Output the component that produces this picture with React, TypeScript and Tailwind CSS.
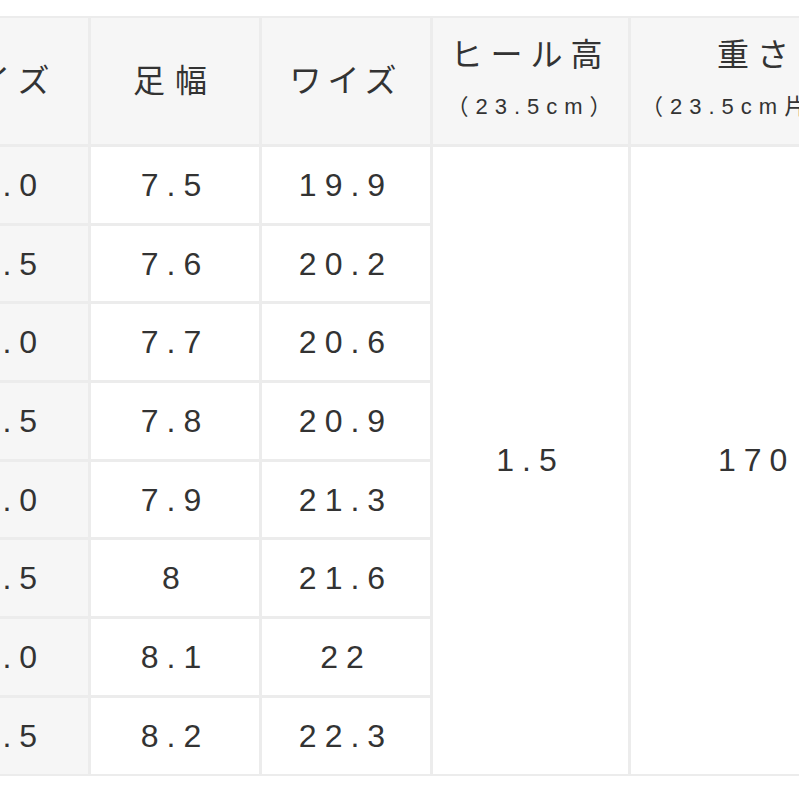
const sizes = ["22.0", "22.5", "23.0", "23.5", "24.0", "24.5", "25.0", "25.5"];
const widths = ["7.5", "7.6", "7.7", "7.8", "7.9", "8", "8.1", "8.2"];
const wises = ["19.9", "20.2", "20.6", "20.9", "21.3", "21.6", "22", "22.3"];

const font = { fontFamily: '"Liberation Sans", "Noto Sans CJK JP", sans-serif' };

const App = () => {
  return (
    <div className="h-[799px] w-[799px] overflow-hidden bg-white pt-[16px] text-[#333333]" style={font}>
      <div className="ml-[-92px] grid w-[1000px] grid-cols-[180px_168px_168px_195px_260px] grid-rows-[126px_repeat(8,75.7px)] gap-[3px] bg-[#ececec] py-[2px]">
        {/* header */}
        <div className="flex items-center justify-center bg-[#f6f6f6] text-[32px] tracking-[8px]">サイズ</div>
        <div className="flex items-center justify-center bg-[#f6f6f6] text-[32px] tracking-[10px]">足幅</div>
        <div className="flex items-center justify-center bg-[#f6f6f6] text-[32px] tracking-[6px]">ワイズ</div>
        <div className="flex flex-col items-center justify-center gap-[12px] bg-[#f6f6f6]">
          <span className="text-[32px] leading-[40px] tracking-[8px]">ヒール高</span>
          <span className="pl-[4px] text-[22px] leading-[40px] tracking-[7px]">（23.5cm）</span>
        </div>
        <div className="flex flex-col items-start justify-center gap-[12px] bg-[#f6f6f6] pl-[10px]">
          <span className="self-start pl-[76px] text-[32px] leading-[40px] tracking-[8px]">重さ</span>
          <span className="whitespace-nowrap text-[22px] leading-[40px] tracking-[7px]">（23.5cm片足）</span>
        </div>

        {/* body */}
        {sizes.map((s, i) => (
          <div
            key={s}
            className="col-start-1 flex items-center justify-center bg-[#f6f6f6] text-[32px] tracking-[8px]"
            style={{ gridRowStart: i + 2 }}
          >
            {s}
          </div>
        ))}
        {widths.map((w, i) => (
          <div
            key={w}
            className="col-start-2 flex items-center justify-center bg-white text-[32px] tracking-[8px]"
            style={{ gridRowStart: i + 2 }}
          >
            {w}
          </div>
        ))}
        {wises.map((w, i) => (
          <div
            key={w}
            className="col-start-3 flex items-center justify-center bg-white text-[32px] tracking-[8px]"
            style={{ gridRowStart: i + 2 }}
          >
            {w}
          </div>
        ))}
        <div className="col-start-4 row-start-2 row-span-8 flex items-center justify-center bg-white text-[32px] tracking-[8px]">
          1.5
        </div>
        <div className="col-start-5 row-start-2 row-span-8 flex items-center bg-white pl-[87px] text-[32px] tracking-[8px]">
          170
        </div>
      </div>
    </div>
  );
};

export default App;
